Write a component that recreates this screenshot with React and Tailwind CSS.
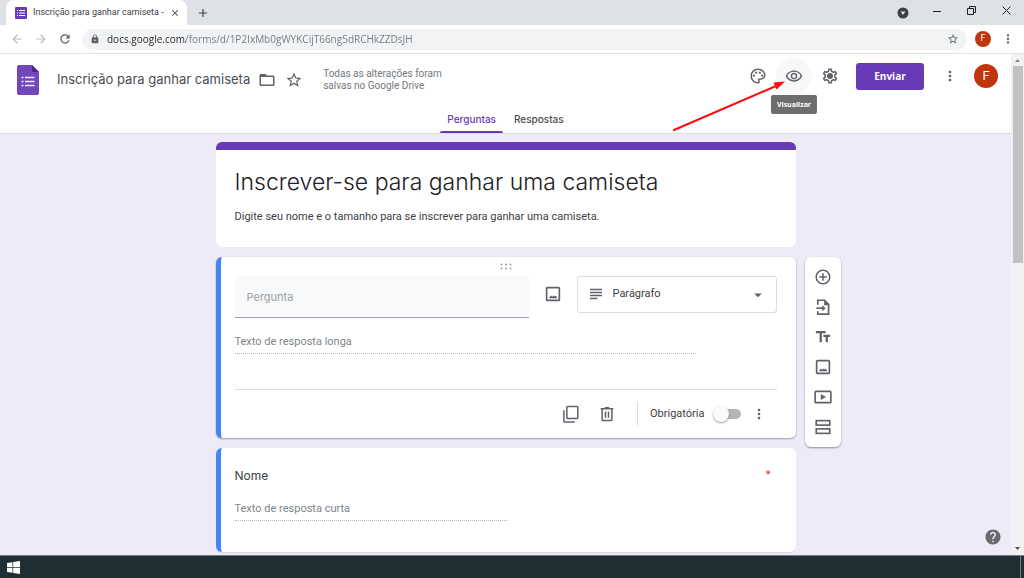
import React from "react";
import {
  MdOutlinePalette, MdOutlineRemoveRedEye, MdOutlineSettings, MdMoreVert, MdStarBorder, MdLock, MdAdd, MdClose, MdRefresh,
  MdArrowBack, MdArrowForward, MdSubject, MdArrowDropDown, MdAddCircleOutline, MdTextFields, MdHelp,
  MdFolderOpen,
} from "react-icons/md";

const sans = "font-['Inter','Liberation_Sans',sans-serif]";

function ImageIcon() {
  return (
    <svg viewBox="0 0 24 24" className="size-4.5" fill="none" stroke="currentColor" strokeWidth="2.200">
      <rect x="3.500" y="3.500" width="17" height="17" rx="1" />
      <path d="M6.500 17.500l2.500-3.500 2 1.800 2-1.800 1.500 1.200 1.300-1.200 2 3.500z" fill="currentColor" stroke="none" />
    </svg>
  );
}

function ImportIcon() {
  return (
    <svg viewBox="0 0 24 24" className="size-4.5" fill="none" stroke="currentColor" strokeWidth="2.200">
      <path d="M5 9V3h9l5.500 5.500V21.500H5V17.500" />
      <path d="M13.500 2.500v7h7z" fill="currentColor" stroke="none" />
      <path d="M3 13.500h9" />
      <path d="M11 9.500l4.500 4-4.500 4z" fill="currentColor" stroke="none" />
    </svg>
  );
}

function VideoIcon() {
  return (
    <svg viewBox="0 0 24 24" className="size-4.5" fill="none" stroke="currentColor" strokeWidth="2.200">
      <rect x="1.500" y="4.500" width="21" height="15" rx="1" />
      <path d="M9 8v8l7-4z" fill="currentColor" stroke="none" />
    </svg>
  );
}

function SectionIcon() {
  return (
    <svg viewBox="0 0 24 24" className="size-4.5" fill="none" stroke="currentColor" strokeWidth="2.200">
      <rect x="3" y="3.500" width="18" height="6" />
      <rect x="3" y="14.500" width="18" height="6" />
    </svg>
  );
}

function CopyIcon() {
  return (
    <svg viewBox="0 0 24 24" className="size-4.5" fill="none" stroke="currentColor" strokeWidth="2">
      <rect x="6.500" y="2" width="14.500" height="16" rx="1" />
      <path d="M2.500 7v14.500a1 1 0 0 0 1 1H17" />
    </svg>
  );
}

function TrashIcon() {
  return (
    <svg viewBox="0 0 24 24" className="size-4.5" fill="none" stroke="currentColor" strokeWidth="2">
      <path d="M3.500 5h17M9 3.800h6M5.500 5v14.500a1 1 0 0 0 1 1h11a1 1 0 0 0 1-1V5M10 8.500v8.500M14 8.500v8.500" />
    </svg>
  );
}

function GearIcon() {
  return (
    <span className="grid size-5 place-items-center">
      <MdOutlineSettings className="col-start-1 row-start-1 size-4.5" />
      <svg viewBox="0 0 18 18" className="col-start-1 row-start-1 size-4.5"><circle cx="9" cy="9" r="2.600" fill="currentColor" /></svg>
    </span>
  );
}

function BrowserBar() {
  return (
    <div className="shrink-0">
      <div className="flex h-[25px] bg-[#dee1e6] pl-1.5 text-[#3c4043]">
        <div className="flex w-[181px] items-center rounded-t-lg bg-white pr-[7px] pl-[9px]">
          <svg viewBox="0 0 12 12" className="size-3 shrink-0">
            <rect width="12" height="12" rx="1" fill="#673ab7" />
            <path d="M2 3.500h1M2 6h1M2 8.500h1M4 3.500h6M4 6h6M4 8.500h6" stroke="#fff" />
          </svg>
          <span className="ml-1.5 flex-1 whitespace-nowrap text-[9px]">Inscrição para ganhar camiseta -</span>
          <button aria-label="Fechar guia"><MdClose className="size-2.5" /></button>
        </div>
        <button aria-label="Nova guia" className="ml-2 grid w-4 place-items-center"><MdAdd className="size-3.5" /></button>
        <div className="ml-auto flex items-center">
          <button aria-label="Pesquisar guias" className="mr-6">
            <svg viewBox="0 0 12 12" className="size-3"><circle cx="6" cy="6" r="5.500" fill="#3c4043" /><path d="M3.500 4.500h5L6 8z" fill="#dee1e6" /></svg>
          </button>
          <button aria-label="Minimizar" className="mr-6.5 mb-1"><svg viewBox="0 0 8 8" className="size-2" stroke="#202124"><path d="M0 4.500h8" /></svg></button>
          <button aria-label="Restaurar" className="mr-6.5 mb-1"><svg viewBox="0 0 9 9" className="size-[9px]" fill="none" stroke="#202124"><path d="M.5 2.500h6v6h-6zM2.500 2.500v-2h6v6h-2" /></svg></button>
          <button aria-label="Fechar" className="mr-[13px] mb-1"><svg viewBox="0 0 9 9" className="size-[9px]" stroke="#202124"><path d="M.5.5l8 8M8.500.5l-8 8" /></svg></button>
        </div>
      </div>
      <div className="flex h-[29px] items-center border-b border-[#e2e4e7] bg-white pr-[9px] pl-2.5 text-[#5f6368]">
        <button aria-label="Voltar" className="text-[#babcbe]"><MdArrowBack className="size-3.5" /></button>
        <button aria-label="Avançar" className="ml-2.5 text-[#babcbe]"><MdArrowForward className="size-3.5" /></button>
        <button aria-label="Recarregar" className="ml-2.5"><MdRefresh className="size-3.5" /></button>
        <div className="ml-2.5 flex h-[21px] flex-1 items-center rounded-full bg-[#f1f3f4] pr-2 pl-2">
          <MdLock className="size-2.5" />
          <input
            aria-label="Endereço"
            defaultValue="docs.google.com/forms/d/1P2IxMb0gWYKCijT66ng5dRCHkZZDsJH"
            className="ml-[7px] min-w-0 flex-1 bg-[linear-gradient(90deg,#202124_79px,#74787c_79px)] bg-clip-text font-['Open_Sans',sans-serif] text-[10px] text-transparent outline-none"
          />
          <button aria-label="Favoritar"><MdStarBorder className="size-3" /></button>
        </div>
        <button aria-label="Perfil" className="ml-2 size-4 rounded-full bg-[#bf360c] text-[9px] text-white">F</button>
        <button aria-label="Menu do navegador" className="ml-2.5"><MdMoreVert className="size-3.5" /></button>
      </div>
    </div>
  );
}

function Header() {
  return (
    <header className="border-b border-[#dadce0] bg-white text-[#5f6368]">
      <div className="flex items-start justify-between">
        <div className="flex h-[51px] items-center pl-[17px]">
          <svg viewBox="0 0 22 30" className="h-[30px] w-[22px]">
            <path d="M2 0h13l7 7v21a2 2 0 0 1-2 2H2a2 2 0 0 1-2-2V2a2 2 0 0 1 2-2z" fill="#7248b9" />
            <path d="M15 0l7 7h-5.500A1.500 1.500 0 0 1 15 5.500z" fill="#49258a" />
            <path d="M8 12.500h9.500M8 16.500h9.500M8 20.500h9.500M4.500 12.500h2M4.500 16.500h2M4.500 20.500h2" stroke="#f1eaff" strokeWidth="1.600" />
          </svg>
          <h1 className={`ml-[18px] whitespace-nowrap text-[13px] text-[#4a4d51] ${sans}`}>Inscrição para ganhar camiseta</h1>
          <button aria-label="Mover para pasta" className="ml-2"><MdFolderOpen className="size-4.5" /></button>
          <button aria-label="Marcar com estrela" className="ml-[9px]"><MdStarBorder className="size-4.5" /></button>
          <p className="ml-5 whitespace-nowrap text-[10px] leading-3 text-[#74787c]">Todas as alterações foram<br />salvas no Google Drive</p>
        </div>
        <div className="flex h-11 items-center pr-[13px]">
          <button aria-label="Personalizar tema"><MdOutlinePalette className="size-4.5" /></button>
          <div className="relative ml-[9px]">
            <button aria-label="Visualizar" className="grid size-9 place-items-center rounded-full bg-[#f8f8f9]"><MdOutlineRemoveRedEye className="size-4.5" /></button>
            <span role="tooltip" className="absolute top-[37px] left-1/2 -translate-x-1/2 rounded-xs bg-[#6d6d6d] px-1.5 py-1 font-['Open_Sans',sans-serif] text-[7px] leading-[11px] font-bold text-white">Visualizar</span>
            <svg viewBox="0 0 114 54" className="pointer-events-none absolute top-[21px] right-[26px] h-[54px] w-[114px]">
              <path d="M2 51L104 7" stroke="#fd0d0d" strokeWidth="2" strokeLinecap="round" />
              <path d="M113 2.500l-8.500 8-3-7z" fill="#fd0d0d" />
            </svg>
          </div>
          <button aria-label="Configurações" className="ml-2"><GearIcon /></button>
          <button className="ml-4 h-[27px] w-[68px] rounded-[3px] bg-[#673ab7] font-['Open_Sans',sans-serif] text-[10px] font-bold text-white">Enviar</button>
          <button aria-label="Mais opções" className="ml-4.5"><MdMoreVert className="size-4" /></button>
          <button aria-label="Conta" className="ml-4 size-6 rounded-full bg-[#bf360c] text-[13px] text-white">F</button>
        </div>
      </div>
      <nav className={`flex h-7 justify-center text-[10px] font-medium ${sans}`}>
        <a href="#perguntas" className="relative px-[7px] leading-7 text-[#673ab7]">Perguntas<span className="absolute inset-x-0 bottom-0 h-0.5 rounded-t-sm bg-[#673ab7]" /></a>
        <a href="#respostas" className="ml-1 px-[7px] leading-7 text-[#4a4d51]">Respostas</a>
      </nav>
    </header>
  );
}

function QuestionCard() {
  return (
    <section className="col-start-2 rounded-md border-l-5 border-[#4285f4] bg-white pr-[19px] pl-3.5 shadow-[0_1px_2px_rgba(0,0,0,0.35)]">
      <div className="flex h-[19px] items-center justify-center">
        <svg viewBox="0 0 12 7" className="h-[7px] w-3" fill="#9aa0a6">
          <circle cx="1.500" cy="1.500" r="1" /><circle cx="6" cy="1.500" r="1" /><circle cx="10.500" cy="1.500" r="1" />
          <circle cx="1.500" cy="5.500" r="1" /><circle cx="6" cy="5.500" r="1" /><circle cx="10.500" cy="5.500" r="1" />
        </svg>
      </div>
      <div className="flex items-start">
        <input aria-label="Pergunta" placeholder="Pergunta" className={`h-[42px] min-w-0 flex-1 rounded-t-xs border-b border-[#9aa0a6] bg-[#f8f9fa] px-3 text-[11px] outline-none placeholder:text-[#9b9fa4] ${sans}`} />
        <button aria-label="Adicionar imagem" className="mx-[15px] mt-[9px] text-[#5f6368]"><ImageIcon /></button>
        <div className="relative">
          <MdSubject className="pointer-events-none absolute top-[9px] left-2.5 size-4.5 text-[#5f6368]" />
          <select aria-label="Tipo de pergunta" className="h-[37px] w-[200px] appearance-none rounded-[3px] border border-[#dadce0] bg-white pl-[35px] text-[11px] text-[#3c4043]">
            <option>Parágrafo</option>
          </select>
          <MdArrowDropDown className="pointer-events-none absolute top-2.5 right-2.5 size-4.5 text-[#5f6368]" />
        </div>
      </div>
      <p className="mt-4 mr-[81px] border-b border-dotted border-[#b5b5b5] pb-[3px] text-[11px] leading-4 text-[#80868b]">Texto de resposta longa</p>
      <div className="mt-[35px] flex h-[49px] items-center justify-end border-t border-[#dadce0] pr-2.5 text-[#5f6368]">
        <button aria-label="Duplicar"><CopyIcon /></button>
        <button aria-label="Excluir" className="ml-4.5"><TrashIcon /></button>
        <label className="ml-[21px] flex h-6 items-center border-l border-[#dadce0] pl-3 text-[11px] text-[#3c4043]">
          Obrigatória
          <span className="relative ml-2 flex items-center">
            <input type="checkbox" role="switch" className="peer h-2.5 w-7 appearance-none rounded-full bg-[#b5b5b5]" />
            <span className="pointer-events-none absolute left-0 size-4 rounded-full bg-[#fafafa] shadow-[0_1px_2px_rgba(0,0,0,0.4)] peer-checked:left-3" />
          </span>
        </label>
        <button aria-label="Mais opções da pergunta" className="ml-2.5"><MdMoreVert className="size-4" /></button>
      </div>
    </section>
  );
}

function Toolbox() {
  const tools = [
    ["Adicionar pergunta", <MdAddCircleOutline className="size-4.5" />],
    ["Importar perguntas", <ImportIcon />],
    ["Adicionar título e descrição", <MdTextFields className="size-4.5" />],
    ["Adicionar imagem", <ImageIcon />],
    ["Adicionar vídeo", <VideoIcon />],
    ["Adicionar seção", <SectionIcon />],
  ];
  return (
    <aside className="col-start-3 row-span-2 row-start-2 ml-[9px] flex flex-col self-start justify-self-start rounded-md bg-white px-[9px] py-[5px] text-[#5f6368] shadow-[0_1px_2px_rgba(0,0,0,0.4)]">
      {tools.map(([label, icon]) => (
        <button key={label} aria-label={label} className="grid h-[30px] place-items-center">{icon}</button>
      ))}
    </aside>
  );
}

function Scrollbar() {
  return (
    <div aria-hidden="true" className="flex w-[13px] shrink-0 flex-col items-center bg-[#f1f1f1]">
      <svg viewBox="0 0 13 12" className="h-3 w-[13px]"><path d="M4 8l2.500-3L9 8z" fill="#8a8a8a" /></svg>
      <div className="h-[197px] w-2.5 bg-[#c1c1c1]" />
      <svg viewBox="0 0 13 12" className="mt-auto h-3 w-[13px]"><path d="M4 4l2.500 3L9 4z" fill="#505050" /></svg>
    </div>
  );
}

export default function App() {
  return (
    <div className="flex h-screen flex-col font-['Roboto',sans-serif]">
      <BrowserBar />
      <div className="flex min-h-0 flex-1">
        <div className="relative flex min-w-0 flex-1 flex-col bg-[#eeeaf8]">
          <Header />
          <main className="grid min-h-0 flex-1 grid-cols-[1fr_580px_1fr] content-start gap-y-2.5 overflow-hidden pt-2">
            <section className="col-start-2 overflow-hidden rounded-md border-t-8 border-[#673ab7] bg-white px-[19px] pt-4 pb-[22px]">
              <h2 className={`text-[23px] leading-8 font-light text-[#202124] ${sans}`}>Inscrever-se para ganhar uma camiseta</h2>
              <p className="mt-[11px] text-[11px] leading-4 text-[#3c4043]">Digite seu nome e o tamanho para se inscrever para ganhar uma camiseta.</p>
            </section>
            <QuestionCard />
            <section className="col-start-2 rounded-md border-l-5 border-[#4285f4] bg-white pt-5 pr-[25px] pb-[31px] pl-3.5 shadow-[0_1px_1px_rgba(0,0,0,0.08)]">
              <div className="flex items-start justify-between">
                <h3 className={`text-[12px] leading-4 text-[#3c4043] ${sans}`}>Nome</h3>
                <span className="text-[11px] leading-3.5 text-[#d93025]">*</span>
              </div>
              <p className="mt-[17px] w-[272px] border-b border-dotted border-[#b5b5b5] pb-[3px] text-[11px] leading-4 text-[#80868b]">Texto de resposta curta</p>
            </section>
            <Toolbox />
          </main>
          <button aria-label="Ajuda" className="absolute right-[9px] bottom-[9px] text-[#6b686f]"><MdHelp className="size-4.5" /></button>
        </div>
        <Scrollbar />
      </div>
      <footer className="flex h-[23px] shrink-0 items-center justify-between border-t border-[#708084] bg-[#1e2e32] pl-[7px]">
        <button aria-label="Iniciar">
          <svg viewBox="0 0 13 13" className="size-[13px]" fill="#fff"><path d="M0 2l5.500-.8V6H0zM6.200 1.100L13 0v6H6.200zM0 6.800h5.500v4.900L0 11zM6.200 6.800H13V13l-6.800-1.100z" /></svg>
        </button>
        <span className="mr-[3px] h-full w-px bg-[#708084]" />
      </footer>
    </div>
  );
}
